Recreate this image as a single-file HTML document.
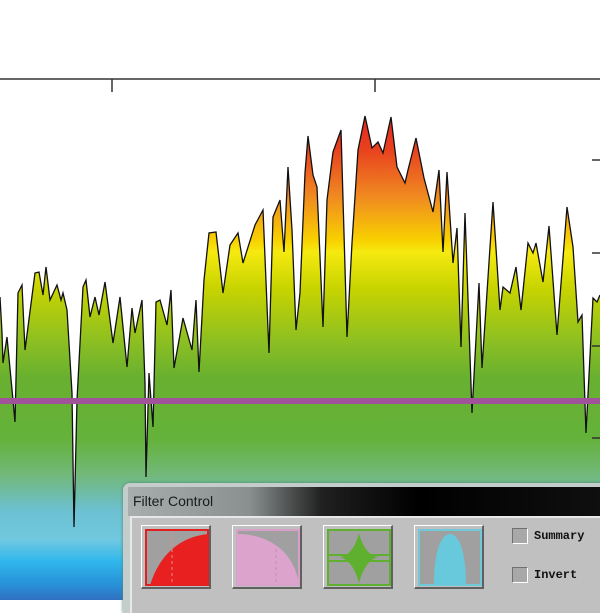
<!DOCTYPE html>
<html><head><style>
body{margin:0;width:600px;height:600px;overflow:hidden;background:#fff;font-family:"Liberation Sans",sans-serif;position:relative}
svg{position:absolute;left:0;top:0}
.win{position:absolute;left:123px;top:483px;width:490px;height:130px;border-radius:7px 0 0 0;background:#c4cccc;box-shadow:0 0 3px #4a8a6a}
.title{position:absolute;left:5px;top:4px;right:0;height:29px;background:linear-gradient(90deg,#a8aeae 0%,#8a9090 25%,#202020 40%,#000 60%,#101010 100%);}
.title span{position:absolute;left:5px;top:6px;font-size:14px;color:#1a1a1a}
.body{position:absolute;left:7px;top:33px;right:0;bottom:0;background:#c0c0c0;border-top:2px solid #e8e8e8;border-left:2px solid #e8e8e8}
.btn{position:absolute;top:7px;width:70px;height:64px;background:#c0c0c0;border:1px solid #fff;border-right:2px solid #606060;border-bottom:2px solid #606060;box-sizing:border-box}
.btn svg{position:absolute;left:3px;top:3px}
.cb{position:absolute;left:380px;width:14px;height:14px;background:#a8a8a8;border:1px solid #707070;border-right-color:#fff;border-bottom-color:#fff}
.lbl{position:absolute;left:402px;font-family:"Liberation Mono",monospace;font-size:12px;color:#111;font-weight:bold}
</style></head><body>
<svg width="600" height="600">
<defs><linearGradient id="g" x1="0" y1="0" x2="0" y2="600" gradientUnits="userSpaceOnUse">
<stop offset="0.19" stop-color="#e5241f"/><stop offset="0.25" stop-color="#e8421f"/><stop offset="0.33" stop-color="#f08c20"/><stop offset="0.40" stop-color="#f8d000"/><stop offset="0.42" stop-color="#f6ea10"/><stop offset="0.48" stop-color="#c8d400"/><stop offset="0.57" stop-color="#8cbf22"/><stop offset="0.63" stop-color="#68b030"/><stop offset="0.73" stop-color="#64b23a"/><stop offset="0.79" stop-color="#72b878"/><stop offset="0.85" stop-color="#6cc0d0"/><stop offset="0.90" stop-color="#70c8e0"/><stop offset="0.935" stop-color="#30b8ec"/><stop offset="0.975" stop-color="#2890d8"/><stop offset="1" stop-color="#3070c0"/></linearGradient></defs>
<path id="c" fill="url(#g)" d="M0,600 L0,297 L2,333 L3,363 L7,337 L13,400 L15,422 L18,293 L22,285 L25,350 L35,273 L39,272 L43,295 L46,267 L50,300 L57,285 L61,300 L63,293 L67,310 L72,393 L74,527 L77,400 L83,287 L86,280 L90,317 L95,297 L99,315 L105,282 L113,343 L120,297 L127,367 L132,308 L135,333 L142,300 L145,383 L146,477 L149,373 L153,427 L156,302 L160,300 L167,325 L171,290 L174,368 L183,318 L192,350 L196,300 L199,372 L204,280 L209,233 L216,232 L223,293 L230,245 L238,233 L243,263 L255,225 L263,210 L269,353 L273,217 L280,200 L284,252 L288,167 L292,230 L296,330 L300,293 L305,173 L308,136 L313,175 L317,187 L323,327 L327,200 L333,152 L341,130 L347,337 L352,243 L358,150 L365,116 L372,148 L378,142 L383,153 L391,117 L397,167 L405,183 L408,170 L416,138 L424,178 L433,212 L439,170 L443,252 L447,172 L453,263 L457,228 L461,347 L465,213 L472,413 L479,283 L482,368 L493,202 L500,310 L503,287 L510,293 L516,267 L521,310 L528,243 L533,253 L536,243 L543,282 L549,226 L557,335 L567,207 L573,247 L578,322 L582,315 L586,433 L593,298 L597,302 L600,295 L600,600 Z"/>
<path fill="none" stroke="#111" stroke-width="1.3" d="M0,297 L2,333 L3,363 L7,337 L13,400 L15,422 L18,293 L22,285 L25,350 L35,273 L39,272 L43,295 L46,267 L50,300 L57,285 L61,300 L63,293 L67,310 L72,393 L74,527 L77,400 L83,287 L86,280 L90,317 L95,297 L99,315 L105,282 L113,343 L120,297 L127,367 L132,308 L135,333 L142,300 L145,383 L146,477 L149,373 L153,427 L156,302 L160,300 L167,325 L171,290 L174,368 L183,318 L192,350 L196,300 L199,372 L204,280 L209,233 L216,232 L223,293 L230,245 L238,233 L243,263 L255,225 L263,210 L269,353 L273,217 L280,200 L284,252 L288,167 L292,230 L296,330 L300,293 L305,173 L308,136 L313,175 L317,187 L323,327 L327,200 L333,152 L341,130 L347,337 L352,243 L358,150 L365,116 L372,148 L378,142 L383,153 L391,117 L397,167 L405,183 L408,170 L416,138 L424,178 L433,212 L439,170 L443,252 L447,172 L453,263 L457,228 L461,347 L465,213 L472,413 L479,283 L482,368 L493,202 L500,310 L503,287 L510,293 L516,267 L521,310 L528,243 L533,253 L536,243 L543,282 L549,226 L557,335 L567,207 L573,247 L578,322 L582,315 L586,433 L593,298 L597,302 L600,295"/>
<rect x="0" y="398" width="600" height="6" fill="#a0529a"/>
<line x1="0" y1="79" x2="600" y2="79" stroke="#333" stroke-width="1.5"/>
<line x1="112" y1="79" x2="112" y2="92" stroke="#333" stroke-width="1.5"/>
<line x1="375" y1="79" x2="375" y2="92" stroke="#333" stroke-width="1.5"/>
<g stroke="#333" stroke-width="1.5"><line x1="592" y1="160" x2="600" y2="160"/><line x1="592" y1="253" x2="600" y2="253"/><line x1="592" y1="346" x2="600" y2="346"/><line x1="592" y1="438" x2="600" y2="438"/></g>
</svg>
<div class="win"><div class="title"><span>Filter Control</span></div>
<div class="body">
<div class="btn" style="left:9px"><svg width="64" height="58"><rect x="1" y="1" width="62" height="55" fill="#a0a0a0" stroke="#e02020" stroke-width="2"/><path d="M5,56 C15,25 35,8 63,5 L63,56 Z" fill="#e82020"/><line x1="27" y1="2" x2="27" y2="56" stroke="#e88" stroke-dasharray="3,3"/></svg></div>
<div class="btn" style="left:100px"><svg width="64" height="58"><rect x="1" y="1" width="62" height="55" fill="#a0a0a0" stroke="#d8a0c8" stroke-width="2"/><path d="M1,5 C30,5 58,20 63,56 L1,56 Z" fill="#dca4cc"/><line x1="40" y1="2" x2="40" y2="56" stroke="#c88ab8" stroke-dasharray="3,3"/></svg></div>
<div class="btn" style="left:191px"><svg width="64" height="58"><rect x="1" y="1" width="62" height="55" fill="#a0a0a0" stroke="#60b030" stroke-width="2"/><path d="M32,4 C28,20 20,28 12,28 C20,29 28,38 32,54 C36,38 44,29 52,28 C44,28 36,20 32,4 Z" fill="#60b030"/><rect x="2" y="25" width="60" height="2" fill="#60b030"/><rect x="2" y="31" width="60" height="2" fill="#60b030"/></svg></div>
<div class="btn" style="left:282px"><svg width="64" height="58"><rect x="1" y="1" width="62" height="55" fill="#a0a0a0" stroke="#70c8d8" stroke-width="2"/><path d="M16,56 C16,20 24,5 32,5 C40,5 48,20 48,56 Z" fill="#68c8dc"/></svg></div>
<div class="cb" style="top:10px"></div><div class="lbl" style="top:11px">Summary</div>
<div class="cb" style="top:49px"></div><div class="lbl" style="top:50px">Invert</div>
</div></div>
</body></html>
